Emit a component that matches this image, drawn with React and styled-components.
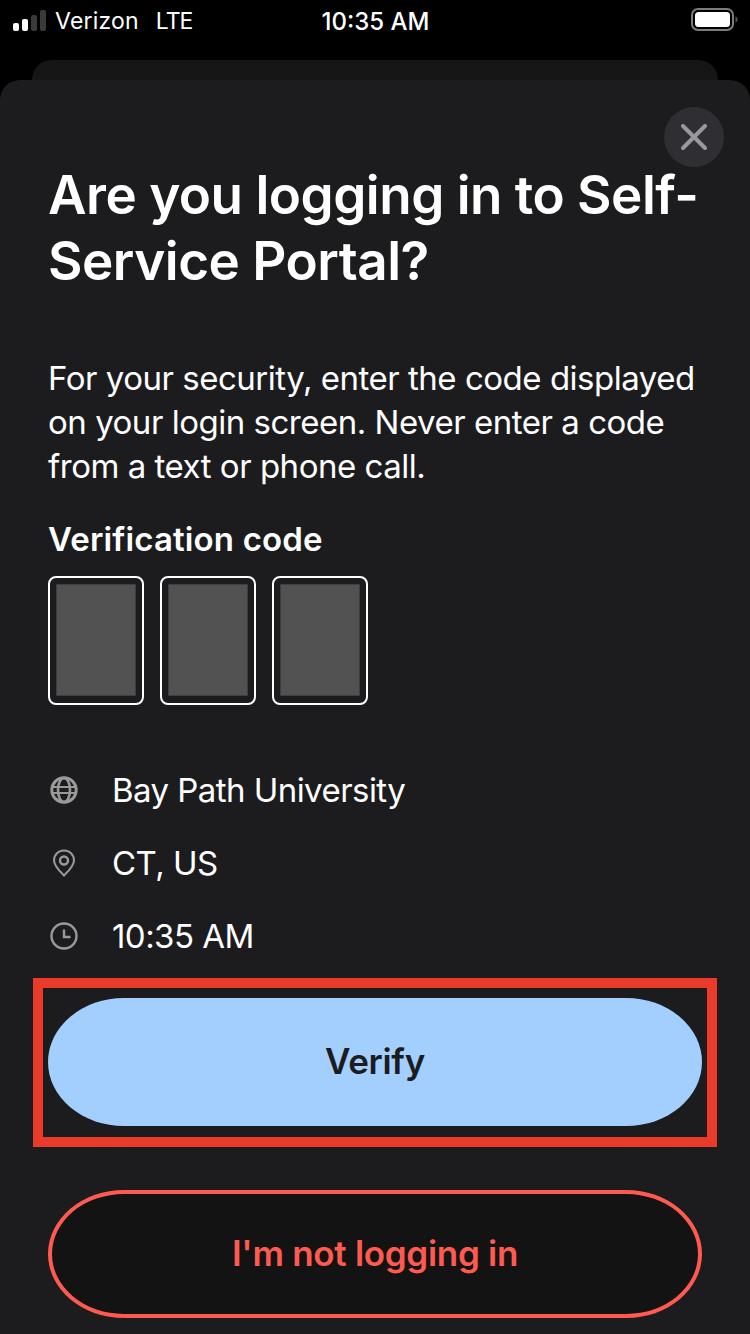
import React from 'react'
import styled, { createGlobalStyle } from 'styled-components'

const GlobalStyle = createGlobalStyle`
  html, body {
    margin: 0;
    padding: 0;
    background: #000;
  }
  body {
    font-family: Inter, "Liberation Sans", sans-serif;
    -webkit-font-smoothing: antialiased;
  }
`

const Page = styled.div`
  width: 750px;
  height: 1334px;
  overflow: hidden;
  display: flex;
  flex-direction: column;
  background: #000;
`

const StatusBar = styled.div`
  height: 60px;
  flex: none;
  display: grid;
  grid-template-columns: 1fr auto 1fr;
  align-items: flex-start;
  padding: 8px 12px 0 13px;
  box-sizing: border-box;
  color: #fff;
  font-size: 23px;
  line-height: 27px;
`

const Carrier = styled.div`
  display: flex;
  align-items: center;
  gap: 8px;
`

const CarrierName = styled.span`
  margin-right: 9px;
  letter-spacing: 0.2px;
`

const Network = styled.span`
  letter-spacing: -1px;
`

const Clock = styled.div`
  font-size: 24px;
  font-weight: 500;
`

const Battery = styled.div`
  justify-self: end;
  display: flex;
`

const BackSheet = styled.div`
  height: 20px;
  flex: none;
  margin: 0 32px;
  background: #161617;
  border-radius: 20px 20px 0 0;
`

const Sheet = styled.div`
  position: relative;
  flex: 1;
  background: #1c1c1e;
  border-radius: 20px 20px 0 0;
  padding: 82px 48px 0;
`

const CloseButton = styled.button`
  position: absolute;
  top: 27px;
  right: 26px;
  width: 60px;
  height: 60px;
  padding: 0;
  border: none;
  border-radius: 50%;
  background: #2f2f33;
  display: flex;
  align-items: center;
  justify-content: center;
`

const Title = styled.h1`
  margin: 0;
  color: #fff;
  font-size: 53px;
  font-weight: 600;
  line-height: 66px;
  letter-spacing: -0.5px;
`

const Message = styled.p`
  margin: 62px 0 0;
  color: #fff;
  font-size: 33px;
  line-height: 44px;
  letter-spacing: -0.48px;
`

const CodeLabel = styled.h2`
  margin: 31px 0 0;
  color: #fff;
  font-size: 33px;
  font-weight: 600;
  line-height: 40px;
  letter-spacing: 0.15px;
`

const CodeRow = styled.div`
  display: flex;
  gap: 16px;
  margin-top: 17px;
`

const CodeBox = styled.div`
  width: 96px;
  height: 129px;
  box-sizing: border-box;
  border: 2px solid #fff;
  border-radius: 8px;
  padding: 6px;
  display: flex;
`

const CodeFill = styled.div`
  flex: 1;
  background: #525252;
  border: 1px solid #3e3e40;
  margin: 0 0 1px;
`

const InfoList = styled.div`
  display: flex;
  flex-direction: column;
  gap: 29px;
  margin-top: 63px;
`

const InfoRow = styled.div`
  display: flex;
  align-items: center;
  gap: 33px;
  height: 44px;
  color: #fff;
  font-size: 33px;
  letter-spacing: -0.55px;
`

const IconSlot = styled.span`
  width: 31px;
  flex: none;
  display: flex;
  justify-content: center;
`

const Highlight = styled.div`
  margin: 20px -15px 0;
  border: 10px solid #ea3a2a;
  padding: 10px 5px 11px;
`

const ActionButton = styled.button`
  display: flex;
  align-items: center;
  justify-content: center;
  width: 654px;
  height: 128px;
  box-sizing: border-box;
  border-radius: 76px / 64px;
  font-family: inherit;
  font-size: 35px;
  font-weight: 600;
  letter-spacing: -0.3px;
  padding: 0 0 2px;
  color: ${p => (p.$danger ? '#ff5a50' : '#1c1c1e')};
  background: ${p => (p.$danger ? '#131313' : '#a3cfff')};
  border: ${p => (p.$danger ? '4px solid #ff5a50' : 'none')};
`

const SecondAction = styled.div`
  margin-top: 43px;
`

const SignalIcon = () => (
  <svg width="34" height="24" viewBox="0 0 34 24">
    <rect x="0" y="13" width="6" height="8" rx="2" fill="#fff" />
    <rect x="9" y="9" width="6" height="12" rx="2" fill="#fff" />
    <rect x="18" y="5" width="6" height="16" rx="2" fill="#3a3a3a" />
    <rect x="27" y="0" width="6" height="21" rx="2" fill="#3a3a3a" />
  </svg>
)

const BatteryIcon = () => (
  <svg width="47" height="24" viewBox="0 0 47 24">
    <rect x="1" y="1" width="41" height="21" rx="6" fill="none" stroke="#7c7c7c" strokeWidth="2" />
    <rect x="4" y="4" width="35" height="15" rx="3.5" fill="#fff" />
    <path d="M44.5 8.5c1.4.4 2 1.6 2 3s-.6 2.6-2 3z" fill="#5c5c5c" />
  </svg>
)

const CloseIcon = () => (
  <svg width="26" height="26" viewBox="0 0 26 26">
    <path d="M2 2 L24 24 M24 2 L2 24" stroke="#98989e" strokeWidth="4" strokeLinecap="round" />
  </svg>
)

const GlobeIcon = () => (
  <svg width="28" height="28" viewBox="0 0 28 28" fill="none" stroke="#9a9a9a">
    <circle cx="14" cy="14" r="12.2" strokeWidth="3" />
    <ellipse cx="14" cy="14" rx="6" ry="12" strokeWidth="2.6" />
    <path d="M2 11H26M2 17H26" strokeWidth="2.2" />
  </svg>
)

const PinIcon = () => (
  <svg width="24" height="28" viewBox="0 0 24 28" fill="none" stroke="#9a9a9a" strokeWidth="2">
    <path d="M12 26.5C8 22.5 2 17 2 11.5C2 5.5 6.5 1.5 12 1.5S22 5.5 22 11.5C22 17 16 22.5 12 26.5Z" />
    <circle cx="12" cy="11.5" r="4" strokeWidth="2.4" />
  </svg>
)

const ClockIcon = () => (
  <svg width="28" height="28" viewBox="0 0 28 28" fill="none" stroke="#9a9a9a" strokeWidth="2.4">
    <circle cx="14" cy="14" r="12.5" />
    <path d="M14 7.5V15H20.5" />
  </svg>
)

const infoRows = [
  { icon: <GlobeIcon />, text: 'Bay Path University' },
  { icon: <PinIcon />, text: 'CT, US' },
  { icon: <ClockIcon />, text: '10:35 AM' },
]

export default function App() {
  return (
    <Page>
      <GlobalStyle />
      <StatusBar>
        <Carrier>
          <SignalIcon />
          <CarrierName>Verizon</CarrierName>
          <Network>LTE</Network>
        </Carrier>
        <Clock>10:35 AM</Clock>
        <Battery>
          <BatteryIcon />
        </Battery>
      </StatusBar>
      <BackSheet />
      <Sheet>
        <CloseButton aria-label="Close">
          <CloseIcon />
        </CloseButton>
        <Title>Are you logging in to Self-Service Portal?</Title>
        <Message>
          For your security, enter the code displayed on your login screen. Never enter a code from a text or phone call.
        </Message>
        <CodeLabel>Verification code</CodeLabel>
        <CodeRow>
          {[0, 1, 2].map(i => (
            <CodeBox key={i}>
              <CodeFill />
            </CodeBox>
          ))}
        </CodeRow>
        <InfoList>
          {infoRows.map(row => (
            <InfoRow key={row.text}>
              <IconSlot>{row.icon}</IconSlot>
              {row.text}
            </InfoRow>
          ))}
        </InfoList>
        <Highlight>
          <ActionButton>Verify</ActionButton>
        </Highlight>
        <SecondAction>
          <ActionButton $danger>I'm not logging in</ActionButton>
        </SecondAction>
      </Sheet>
    </Page>
  )
}
